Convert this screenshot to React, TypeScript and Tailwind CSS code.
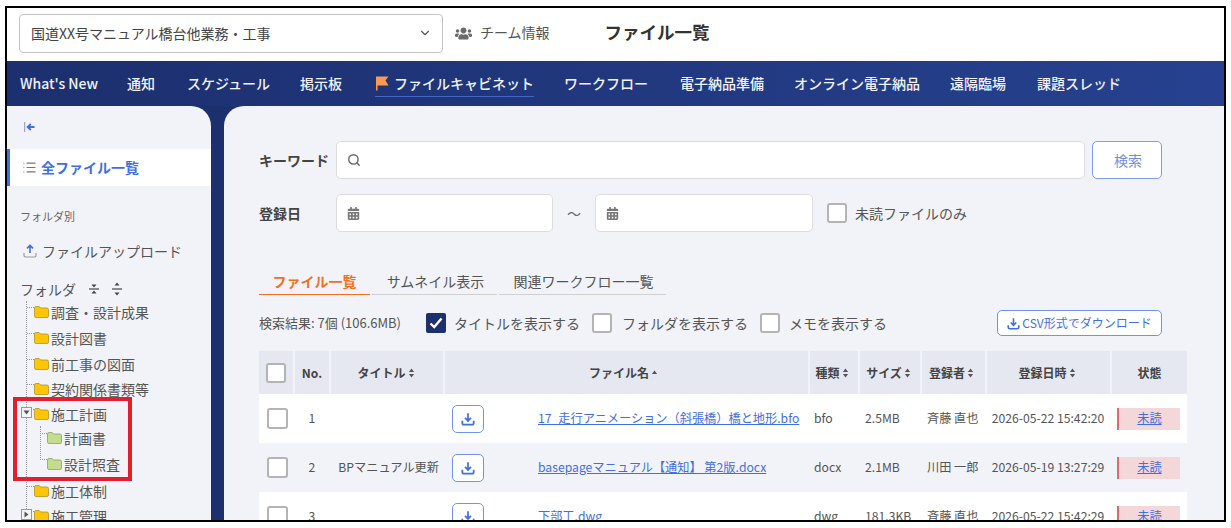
import { ChevronDown, Search, List } from "lucide-react";
import { FaUsers, FaCalendarAlt } from "react-icons/fa";

const navItems = [
  { label: "What's New", cls: "w-[107px]" },
  { label: "通知", cls: "w-[60px]" },
  { label: "スケジュール", cls: "w-[113px]" },
  { label: "掲示板", cls: "w-[75px]" },
];
const navRest = [
  { label: "ワークフロー", cls: "w-[116px]" },
  { label: "電子納品準備", cls: "w-[114px]" },
  { label: "オンライン電子納品", cls: "w-[156px]" },
  { label: "遠隔臨場", cls: "w-[87px]" },
  { label: "課題スレッド", cls: "w-[100px]" },
];

const rows = [
  { no: 1, title: "", file: "17_走行アニメーション（斜張橋）橋と地形.bfo", kind: "bfo", size: "2.5MB", user: "斉藤 直也", date: "2026-05-22 15:42:20", bg: "bg-white" },
  { no: 2, title: "BPマニュアル更新", file: "basepageマニュアル【通知】 第2版.docx", kind: "docx", size: "2.1MB", user: "川田 一郎", date: "2026-05-19 13:27:29", bg: "bg-[#f2f3f8]" },
  { no: 3, title: "", file: "下部工.dwg", kind: "dwg", size: "181.3KB", user: "斉藤 直也", date: "2026-05-22 15:42:29", bg: "bg-white" },
];

const tableCols = "grid grid-cols-[34px_34px_112px_363px_48px_60px_63px_123px_75px] gap-x-[2px]";

function Sort() {
  return (
    <svg width="7" height="10" viewBox="0 0 6 10" className="ml-[2px] shrink-0">
      <path d="M3 0.5 L5.6 4 H0.4 Z M3 9.5 L0.4 6 H5.6 Z" fill="#555" />
    </svg>
  );
}

function SortAsc() {
  return (
    <svg width="7" height="10" viewBox="0 0 6 10" className="ml-[2px] shrink-0">
      <path d="M3 2.5 L5.6 6 H0.4 Z" fill="#555" />
    </svg>
  );
}

function Box({ size = "w-5 h-5" }: { size?: string }) {
  return <span className={`${size} block shrink-0 rounded-[3px] border-2 border-[#b4b4b4] bg-white`} />;
}

function DownloadIcon({ size = 14, color = "#3f6fe0" }: { size?: number; color?: string }) {
  return (
    <svg width={size} height={size} viewBox="0 0 16 16" fill="none" stroke={color} strokeWidth="2">
      <path d="M8 1.5 V10 M4.6 6.8 L8 10.2 L11.4 6.8" />
      <path d="M1.5 10 V12.5 Q1.5 14.5 3.5 14.5 H12.5 Q14.5 14.5 14.5 12.5 V10" />
    </svg>
  );
}

function FolderIcon({ green }: { green?: boolean }) {
  return (
    <svg width="15" height="12" viewBox="0 0 15 12" className="shrink-0">
      <path
        d="M0.5 2 Q0.5 0.5 2 0.5 H5.2 L6.7 2 H13 Q14.5 2 14.5 3.5 V10 Q14.5 11.5 13 11.5 H2 Q0.5 11.5 0.5 10 Z"
        fill={green ? "#c3dc8e" : "#fdc600"}
        stroke={green ? "#7f9a5a" : "#a98a20"}
        strokeWidth="0.7"
      />
    </svg>
  );
}

function Toggle({ open }: { open?: boolean }) {
  return (
    <span className="absolute left-[-13px] top-[-1px] z-10 flex h-[11px] w-[11px] items-center justify-center border border-[#999] bg-[#f4f4f4]">
      <svg width="7" height="7" viewBox="0 0 7 7">
        <path d={open ? "M0.5 1.5 H6.5 L3.5 5.5 Z" : "M1.5 0.5 V6.5 L5.5 3.5 Z"} fill="#555" />
      </svg>
    </span>
  );
}

function TreeRow({ label, h, open, closed, green }: { label: string; h: string; open?: boolean; closed?: boolean; green?: boolean }) {
  return (
    <div className={`${h} flex items-center`}>
      <span className="relative mr-[2px] flex items-center">
        <span className="absolute left-[-7px] top-[1px] w-[7px] border-t border-dotted border-[#999]" />
        {open && <Toggle open />}
        {closed && <Toggle />}
        <FolderIcon green={green} />
      </span>
      <span className="text-[14px] leading-none text-[#555]">{label}</span>
    </div>
  );
}

function Sidebar() {
  return (
    <aside className="w-[204px] shrink-0 overflow-hidden rounded-tr-[20px] bg-[#f2f3f8]">
      <div className="flex h-[43px] items-center pb-[2px] pl-[17px]">
        <svg width="12" height="10" viewBox="0 0 12 10" fill="none">
          <path d="M0.7 0 V10" stroke="#8a94b5" strokeWidth="1" />
          <path d="M10.5 5 H4 M6.8 2 L3.6 5 L6.8 8" stroke="#3f6fe0" strokeWidth="1.8" />
        </svg>
      </div>
      <div className="flex h-[37px] items-center gap-[4px] border-l-[3px] border-[#3f6fe0] bg-white pl-[12px]">
        <List size={15} color="#6f7482" strokeWidth={1.7} />
        <span className="text-[14px] font-bold text-[#3f6fe0]">全ファイル一覧</span>
      </div>
      <div className="pl-[13px] pt-[22px] text-[11px] leading-[16px] text-[#666]">フォルダ別</div>
      <div className="mt-[17px] flex items-center gap-[5px] pl-[16px]">
        <svg width="14" height="14" viewBox="0 0 14 14" fill="none">
          <path d="M7 9 V1.5 M4 4.4 L7 1.4 L10 4.4" stroke="#3f6fe0" strokeWidth="1.6" />
          <path d="M1 9 V11.5 Q1 13 2.5 13 H11.5 Q13 13 13 11.5 V9" stroke="#9a9a9a" strokeWidth="1.2" />
        </svg>
        <span className="text-[14px] leading-[20px] text-[#555]">ファイルアップロード</span>
      </div>
      <div className="mt-[18px] flex h-[20px] items-center pl-[13px]">
        <span className="text-[14px] text-[#555]">フォルダ</span>
        <svg width="12" height="12" viewBox="0 0 12 12" className="ml-[12px]">
          <path d="M1 6 H11" stroke="#444" strokeWidth="1.2" />
          <path d="M6 4.5 L3.5 1.5 H8.5 Z M6 7.5 L8.5 10.5 H3.5 Z" fill="#444" />
        </svg>
        <svg width="12" height="14" viewBox="0 0 12 14" className="ml-[11px]">
          <path d="M1 7 H11" stroke="#444" strokeWidth="1.2" />
          <path d="M6 0.5 L8.5 3.5 H3.5 Z M6 13.5 L3.5 10.5 H8.5 Z" fill="#444" />
        </svg>
      </div>
      <div className="relative ml-[27px]">
        <span className="absolute left-[-8px] top-[2px] h-[230px] border-l border-dotted border-[#999]" />
        <TreeRow label="調査・設計成果" h="h-[26px]" />
        <TreeRow label="設計図書" h="h-[26px]" />
        <TreeRow label="前工事の図面" h="h-[25px]" />
        <TreeRow label="契約関係書類等" h="h-[25px]" />
        <TreeRow label="施工計画" h="h-[25px]" open />
        <div className="relative pl-[13px]">
          <span className="absolute left-[6px] top-0 h-[34px] border-l border-dotted border-[#999]" />
          <TreeRow label="計画書" h="h-[24px]" green />
          <TreeRow label="設計照査" h="h-[28px]" green />
        </div>
        <TreeRow label="施工体制" h="h-[25px]" />
        <TreeRow label="施工管理" h="h-[25px]" closed />
        <span className="absolute left-[-21px] top-[98px] z-20 h-[84px] w-[119px] border-4 border-[#e2202c]" />
      </div>
    </aside>
  );
}

function Header() {
  const cell = "flex items-center justify-center bg-[#e6e8f1] text-[12px] font-bold text-[#444]";
  const heads: [string, "sort" | "asc" | "none", string][] = [
    ["タイトル", "sort", "pr-[2px]"],
    ["ファイル名", "asc", "pr-[6px]"],
    ["種類", "sort", "pr-[4px]"],
    ["サイズ", "sort", "pr-[3px]"],
    ["登録者", "sort", "pr-[4px]"],
    ["登録日時", "sort", "pr-[3px]"],
    ["状態", "none", ""],
  ];
  return (
    <div className={`${tableCols} h-[43px]`}>
      <div className={cell}><Box size="w-[20px] h-[20px]" /></div>
      <div className={cell}>No.</div>
      {heads.map(([label, sort, pad]) => (
        <div key={label} className={`${cell} ${pad}`}>
          {label}
          {sort === "sort" && <Sort />}
          {sort === "asc" && <SortAsc />}
        </div>
      ))}
    </div>
  );
}

function Row({ r }: { r: (typeof rows)[number] }) {
  const text = "flex items-center text-[12.2px] text-[#555]";
  return (
    <div className={`${tableCols} ${r.bg} h-[49px]`}>
      <div className={`${text} pl-[8px]`}><Box size="w-[21px] h-[21px]" /></div>
      <div className={`${text} justify-center`}>{r.no}</div>
      <div className={`${text} justify-end whitespace-nowrap pr-[4px]`}>{r.title}</div>
      <div className={`${text} whitespace-nowrap pl-[7px]`}>
        <span className="flex h-[28px] w-[32px] shrink-0 items-center justify-center rounded-[5px] border border-[#6f95ea] bg-white">
          <DownloadIcon />
        </span>
        <a className="ml-[54px] cursor-pointer text-[#3f6fe0] underline">{r.file}</a>
      </div>
      <div className={`${text} pl-[4px]`}>{r.kind}</div>
      <div className={`${text} whitespace-nowrap pl-[5px]`}>{r.size}</div>
      <div className={`${text} whitespace-nowrap pl-[5px]`}>{r.user}</div>
      <div className={`${text} justify-center whitespace-nowrap pr-[1px]`}>{r.date}</div>
      <div className={`${text} pl-[5px] pr-[7px]`}>
        <span className="flex h-[22px] w-full items-center justify-center border-l-2 border-[#e06a6a] bg-[#f3d7d9]">
          <a className="cursor-pointer text-[#3f6fe0] underline">未読</a>
        </span>
      </div>
    </div>
  );
}

function Check({ checked }: { checked?: boolean }) {
  if (checked) {
    return (
      <span className="flex h-[20px] w-[20px] shrink-0 items-center justify-center rounded-[2px] bg-[#1c2f6e]">
        <svg width="14" height="12" viewBox="0 0 14 12" fill="none">
          <path d="M1.5 6.5 L5.2 10 L12.5 1.5" stroke="#fff" strokeWidth="2.4" />
        </svg>
      </span>
    );
  }
  return <Box size="w-[20px] h-[20px]" />;
}

export default function App() {
  return (
    <div className="h-[528px] w-[1231px] overflow-hidden bg-white pl-[5px] pt-[6px] font-['Noto_Sans_CJK_JP',sans-serif]">
      <div className="flex h-[516px] w-[1221px] flex-col overflow-hidden border-2 border-black">
        <header className="flex h-[53px] shrink-0 items-center bg-white pb-[2px] pl-[12px]">
          <div className="flex h-[39px] w-[424px] items-center justify-between rounded-[4px] border border-[#c4c4c4] pb-[1px] pl-[11px] pr-[10px]">
            <span className="text-[14px] text-[#444]">国道XX号マニュアル橋台他業務・工事</span>
            <ChevronDown size={14} color="#555" strokeWidth={2} />
          </div>
          <FaUsers size={17} color="#6b6b6b" className="ml-[12px]" />
          <span className="-mt-[2px] ml-[8px] text-[14px] text-[#555]">チーム情報</span>
          <h1 className="-mt-[3px] ml-[55px] text-[17.5px] font-bold text-[#333]">ファイル一覧</h1>
        </header>

        <nav className="flex h-[45px] shrink-0 items-center bg-gradient-to-r from-[#1c2f6e] to-[#26418f] pb-[1px] pl-[13px] text-[14px] font-medium text-[#f0f2f8]">
          {navItems.map((n) => (
            <span key={n.label} className={`${n.cls} whitespace-nowrap`}>{n.label}</span>
          ))}
          <span className="mr-[30px] flex h-[27px] items-center gap-[5px] border-b border-[#4466c0] pt-[1px]">
            <svg width="14" height="15" viewBox="0 0 14 15">
              <path d="M1 0.5 H13.5 L10.5 4.5 L13.5 9.5 H2.5 V14.5 H1 Z" fill="#f79a56" />
            </svg>
            ファイルキャビネット
          </span>
          {navRest.map((n) => (
            <span key={n.label} className={`${n.cls} whitespace-nowrap`}>{n.label}</span>
          ))}
        </nav>

        <div className="flex min-h-0 flex-1 gap-[13px] bg-[#1c2f6e]">
          <Sidebar />
          <main className="min-w-0 flex-1 overflow-hidden rounded-tl-[20px] bg-[#f2f3f8] pl-[35px] pr-[38px] pt-[35px]">
            <div className="flex items-center">
              <label className="w-[77px] text-[14px] font-bold text-[#444]">キーワード</label>
              <div className="flex h-[38px] w-[749px] items-center rounded-[5px] border border-[#dcdcdc] bg-white pl-[10px]">
                <Search size={14} color="#666" strokeWidth={2.4} />
              </div>
              <button className="ml-[7px] h-[38px] w-[70px] rounded-[5px] border border-[#7e9fe8] bg-white pl-[2px] text-[14px] text-[#6f90dc]">検索</button>
            </div>

            <div className="mt-[15px] flex items-center">
              <label className="w-[77px] text-[14px] font-bold text-[#444]">登録日</label>
              <div className="flex h-[38px] w-[217px] items-center rounded-[5px] border border-[#dcdcdc] bg-white pl-[10px]">
                <FaCalendarAlt size={13} color="#777" />
              </div>
              <span className="w-[42px] text-center text-[14px] text-[#666]">～</span>
              <div className="flex h-[38px] w-[218px] items-center rounded-[5px] border border-[#dcdcdc] bg-white pl-[10px]">
                <FaCalendarAlt size={13} color="#777" />
              </div>
              <span className="ml-[14px]"><Check /></span>
              <span className="ml-[8px] text-[14px] text-[#555]">未読ファイルのみ</span>
            </div>

            <div className="mt-[36px] flex gap-[2px] text-[14px] text-[#555]">
              <div className="flex h-[27px] w-[111px] items-center justify-center border-b border-[#f2701d] font-bold text-[#f2701d]">ファイル一覧</div>
              <div className="flex h-[27px] w-[125px] items-center justify-center border-b border-[#d0d0d0] pl-[2px]">サムネイル表示</div>
              <div className="flex h-[27px] w-[167px] items-center justify-center border-b border-[#d0d0d0] pl-[2px]">関連ワークフロー一覧</div>
            </div>

            <div className="mt-[15px] flex h-[26px] items-center text-[14px] text-[#555]">
              <span className="w-[167px] text-[13px]">検索結果: 7個 (106.6MB)</span>
              <Check checked />
              <span className="ml-[8px] w-[138px]">タイトルを表示する</span>
              <Check />
              <span className="ml-[10px] w-[138px]">フォルダを表示する</span>
              <Check />
              <span className="ml-[9px]">メモを表示する</span>
              <button className="ml-[110px] flex h-[26px] w-[165px] items-center justify-center gap-[2px] rounded-[5px] border border-[#6f95ea] bg-white text-[12px] text-[#3f6fe0]">
                <DownloadIcon size={13} />
                CSV形式でダウンロード
              </button>
            </div>

            <div className="mt-[15px] w-[928px]">
              <Header />
              {rows.map((r) => (
                <Row key={r.no} r={r} />
              ))}
            </div>
          </main>
        </div>
      </div>
    </div>
  );
}
